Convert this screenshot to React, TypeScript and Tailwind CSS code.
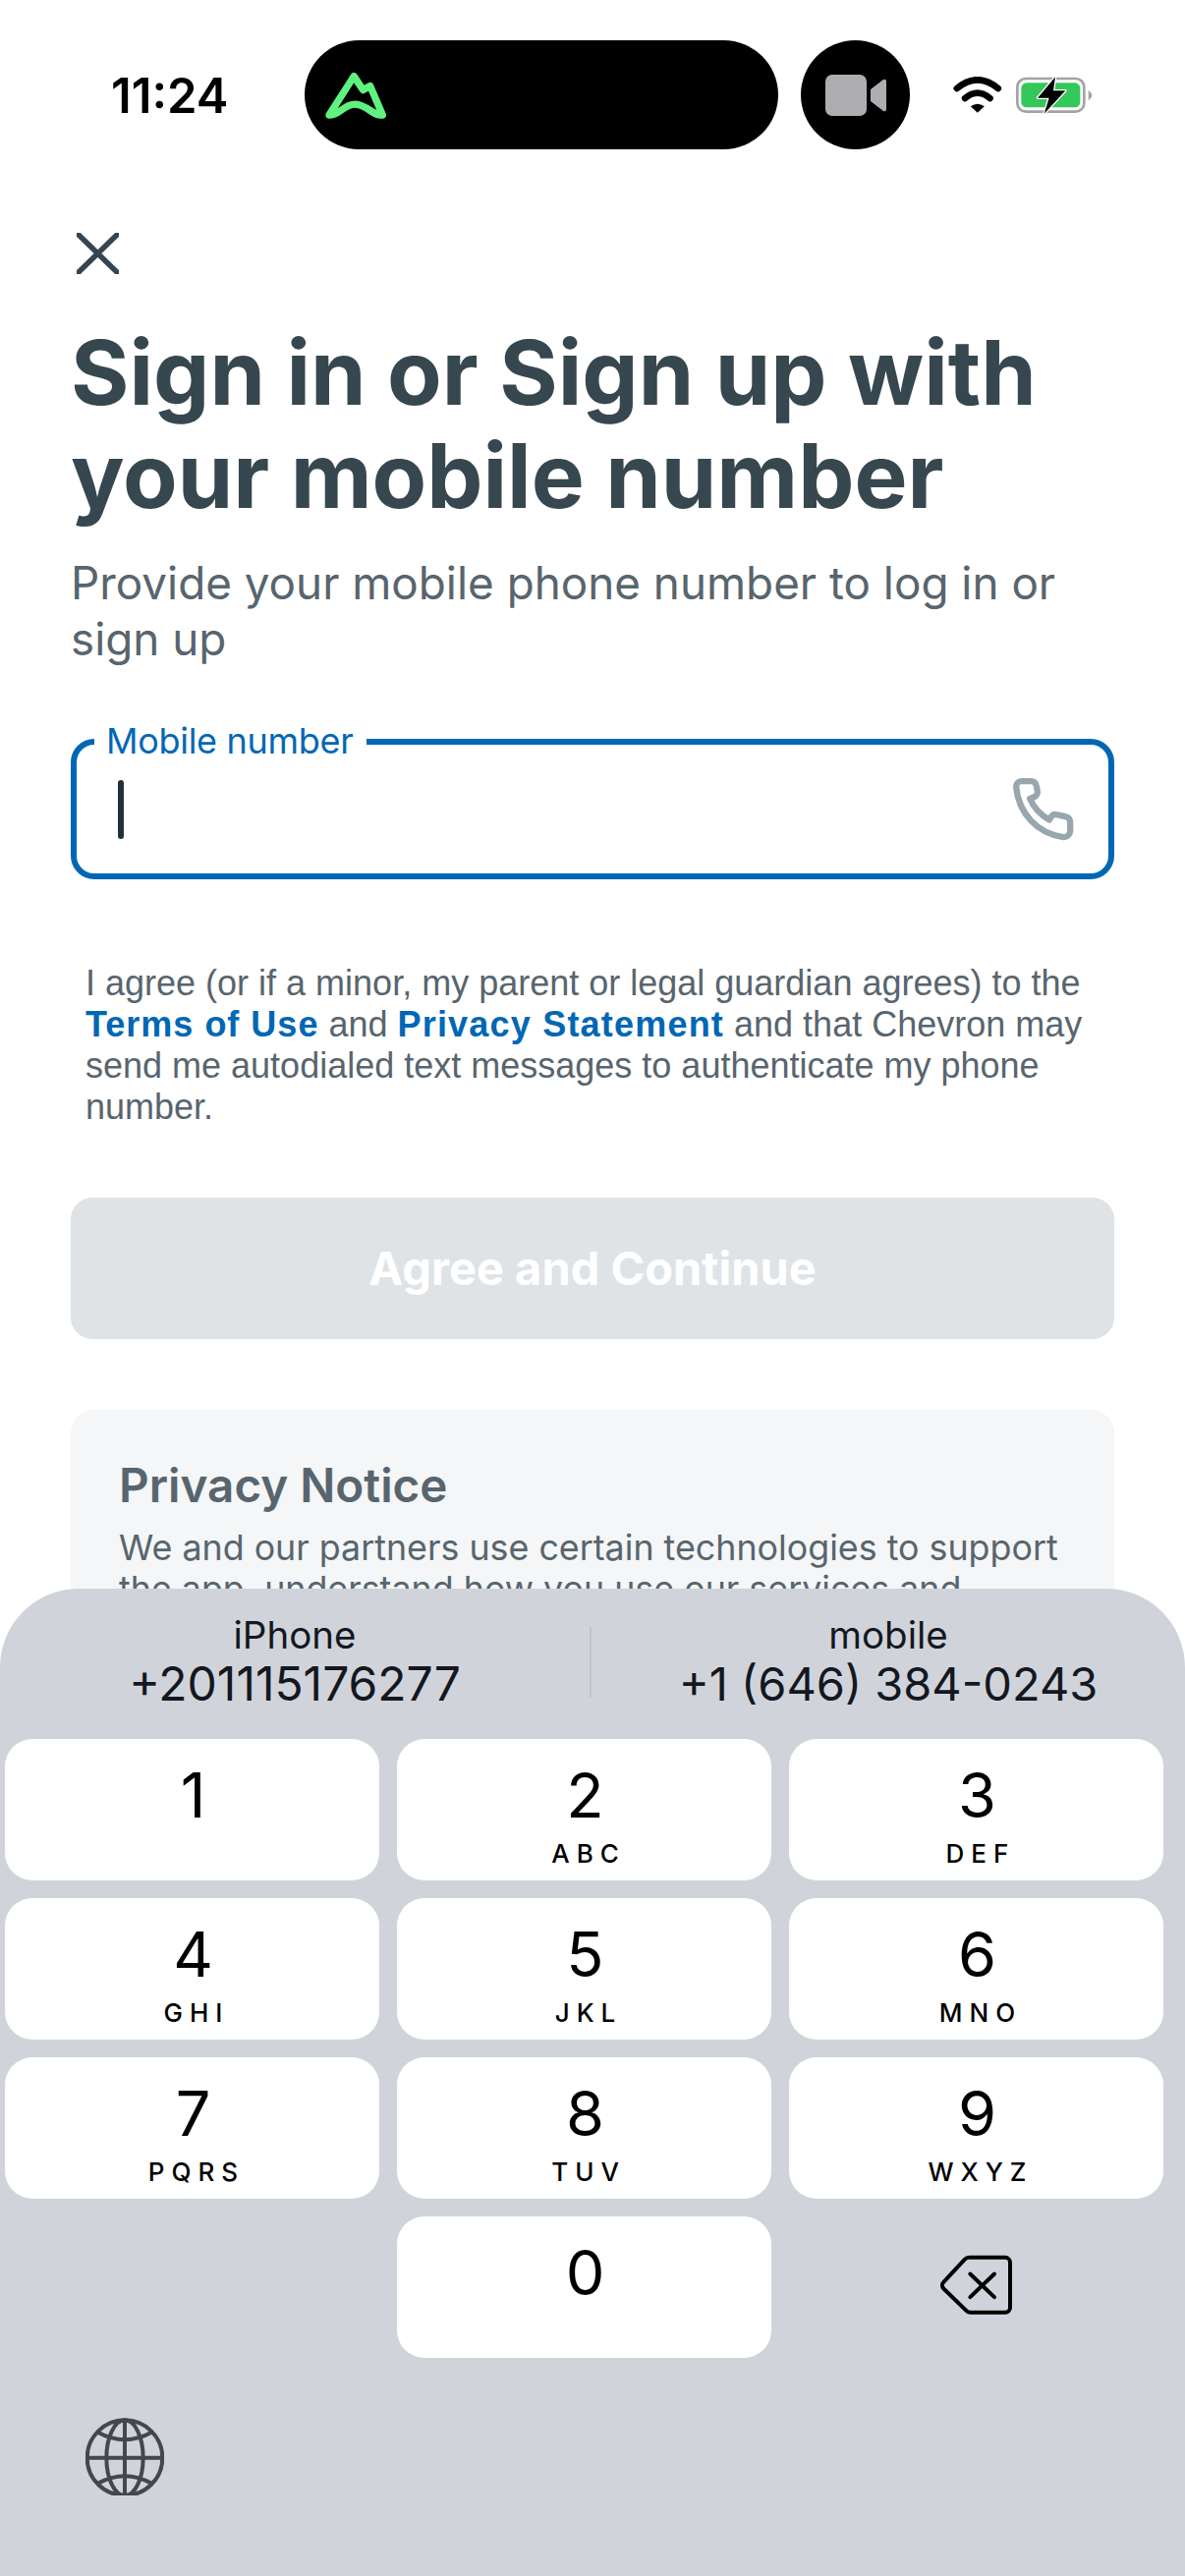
import React from "react";

const keys: [string, string][] = [
  ["1", ""], ["2", "ABC"], ["3", "DEF"],
  ["4", "GHI"], ["5", "JKL"], ["6", "MNO"],
  ["7", "PQRS"], ["8", "TUV"], ["9", "WXYZ"],
];

function Key({ d, l }: { d: string; l: string }) {
  return (
    <div className="flex h-[144px] flex-col items-center rounded-[28px] bg-white pl-[2px] pt-[25px] text-black">
      <div className="h-[64px] text-[63px] leading-[64px]">{d}</div>
      {l && <div className="mt-[14px] pl-[7px] text-[26px] font-medium leading-[28px] tracking-[7px]">{l}</div>}
    </div>
  );
}

export default function App() {
  return (
    <div className="relative h-[2622px] w-[1206px] overflow-hidden bg-white font-['Inter',sans-serif]">
      <div className="flex h-[152px] items-start pt-[41px]">
        <div className="ml-[113px] mt-[35px] w-[120px] whitespace-nowrap text-[49px] font-semibold leading-[44px] text-black">11:24</div>
        <div className="ml-[77px] flex h-[111px] w-[482px] items-center rounded-[56px] bg-black pl-[20px]">
          <svg viewBox="90 120 200 160" width="67" height="53" className="mt-[1px]">
            <path d="M104 259 L180 140 L208 182 L230 170 L268 259 C240 264 222 228 185 226 C150 224 135 262 104 259 Z" fill="none" stroke="#5ff27f" strokeWidth="22" strokeLinejoin="round" />
          </svg>
        </div>
        <div className="ml-[23px] flex h-[111px] w-[111px] items-center justify-center rounded-full bg-black">
          <svg width="62" height="42" viewBox="0 0 62 42">
            <rect x="0" y="0" width="42" height="42" rx="7" fill="#aeaeb2" />
            <path d="M46 15 L59 5 Q62 4 62 7 V35 Q62 38 59 37 L46 27 Z" fill="#aeaeb2" />
          </svg>
        </div>
        <svg className="ml-[44px] mt-[37px]" width="50" height="38" viewBox="88 84 145 114">
          <path d="M97 120 Q160 68 223 120" fill="none" stroke="#000" strokeWidth="20" strokeLinecap="round" />
          <path d="M122 150 Q160 118 198 150" fill="none" stroke="#000" strokeWidth="20" strokeLinecap="round" />
          <path d="M139 175 Q160 160 181 175 L160 194 Z" fill="#000" />
        </svg>
        <svg className="ml-[11px] mt-[32px]" width="82" height="58" viewBox="275 70 246 174">
          <rect x="288" y="91" width="204" height="101" rx="26" fill="none" stroke="#a3a3a3" strokeWidth="8" />
          <rect x="300" y="104" width="180" height="75" rx="16" fill="#34c759" />
          <path d="M505 126 Q516 135 516 142 Q516 149 505 158 Z" fill="#a3a3a3" />
          <path d="M404 86 L350 150 H385 L370 198 L435 128 H398 Z" fill="#000" stroke="#fff" strokeWidth="8" paintOrder="stroke" strokeLinejoin="round" />
        </svg>
      </div>

      <div className="flex flex-col px-[72px]">
        <svg className="ml-[6px] mt-[85px]" width="43" height="42" viewBox="0 0 43 42">
          <path d="M2 2 L41 40 M41 2 L2 40" stroke="#36454f" strokeWidth="5.5" strokeLinecap="round" />
        </svg>
        <h1 className="mt-[48px] text-[90.8px] font-bold leading-[105px] text-[#37474f]">
          Sign in or Sign up with
          <br />
          your mobile number
        </h1>
        <p className="mt-[28px] text-[45.8px] leading-[57px] text-[#58656e]">
          Provide your mobile phone number to log in or sign up
        </p>
        <div className="relative mt-[73px] flex h-[143px] items-center justify-between rounded-[24px] border-[6px] border-[#0067b5] pl-[42px] pr-[32px]">
          <div className="absolute left-[18px] top-[-24px] bg-white pl-[12px] pr-[14px] text-[36px] leading-[40px] tracking-[-0.3px] text-[#0067b5]">Mobile number</div>
          <div className="h-[60px] w-[6px] rounded-full bg-[#22303a]" />
          <svg width="66" height="66" viewBox="0 0 24 24" fill="none" stroke="#98a6ae" strokeWidth="2.3" strokeLinejoin="round" strokeLinecap="round">
            <path d="M1.5 3.5 A2 2 0 0 1 3.5 1.5 H7 A2 2 0 0 1 9 3.2 L9.4 5.2 A2 2 0 0 1 8 7.4 L6.6 8 C8 11.2 10.6 14 13.8 15.8 L14.4 14.8 A2 2 0 0 1 16.6 13.9 L19.8 14.6 A2 2 0 0 1 21.5 16.5 V20 A2.4 2.4 0 0 1 19 22.2 C9.5 21 2.4 13.5 1.5 3.5 Z" />
          </svg>
        </div>
        <p className="ml-[15px] mt-[85px] font-['Liberation_Sans',sans-serif] text-[36px] leading-[42px] text-[#58656e]">
          I agree (or if a minor, my parent or legal guardian agrees) to the{" "}
          <b className="tracking-[1px] text-[#0067b5]">Terms of Use</b> and <b className="tracking-[1.2px] text-[#0067b5]">Privacy Statement</b> and that Chevron may send me autodialed text messages to authenticate my phone number.
        </p>
        <div className="mt-[71px] flex h-[144px] items-center justify-center rounded-[22px] bg-[#dfe3e6] text-[47px] font-bold text-white">
          Agree and Continue
        </div>
        <div className="mt-[72px] h-[300px] rounded-[24px] bg-[#f4f6f7] pl-[49px] pr-[30px] pt-[48px]">
          <div className="text-[47.6px] font-semibold leading-[58px] text-[#58656e]">Privacy Notice</div>
          <p className="mt-[13px] text-[35.8px] leading-[42px] text-[#58656e]">
            We and our partners use certain technologies to support
            <br />
            the app, understand how you use our services and
          </p>
        </div>
      </div>

      <div className="absolute bottom-0 left-0 h-[1005px] w-[1206px] rounded-t-[80px] bg-[#d0d4da]">
        <div className="flex h-[153px] text-[#14171f]">
          <div className="flex w-[600px] flex-col items-center pt-[22px]">
            <div className="text-[38.5px] leading-[50px]">iPhone</div>
            <div className="text-[48px] leading-[50px]">+201115176277</div>
          </div>
          <div className="mt-[39px] h-[72px] w-[2px] bg-[#c0c3cb]" />
          <div className="flex w-[604px] flex-col items-center pt-[22px]">
            <div className="text-[38.5px] leading-[50px]">mobile</div>
            <div className="text-[47px] leading-[50px]">+1 (646) 384-0243</div>
          </div>
        </div>
        <div className="grid grid-cols-3 gap-[18px] pl-[5px] pr-[22px]">
          {keys.map(([d, l]) => (
            <Key key={d} d={d} l={l} />
          ))}
          <div />
          <Key d="0" l="" />
          <div className="flex items-center justify-center">
            <svg width="80" height="67" viewBox="460 280 240 200" fill="none" stroke="#000" strokeWidth="12" strokeLinecap="round" className="ml-[-2px] mt-[-6px]">
              <path d="M560 297 H670 a15 15 0 0 1 15 15 V450 a15 15 0 0 1 -15 15 H565 a20 20 0 0 1 -14 -6 L482 392 a14 14 0 0 1 0 -20 L546 303 a20 20 0 0 1 14 -6 Z" />
              <path d="M563 347 L637 418 M637 347 L563 418" />
            </svg>
          </div>
        </div>
        <svg className="ml-[87px] mt-[60px]" width="80" height="80" viewBox="142 120 240 240" fill="none" stroke="#43474e" strokeWidth="12">
          <circle cx="262" cy="245" r="115" />
          <ellipse cx="262" cy="245" rx="56" ry="115" />
          <path d="M262 130 V360 M147 245 H377" />
          <path d="M180 167 Q262 212 344 167 M180 323 Q262 278 344 323" />
        </svg>
      </div>
    </div>
  );
}
